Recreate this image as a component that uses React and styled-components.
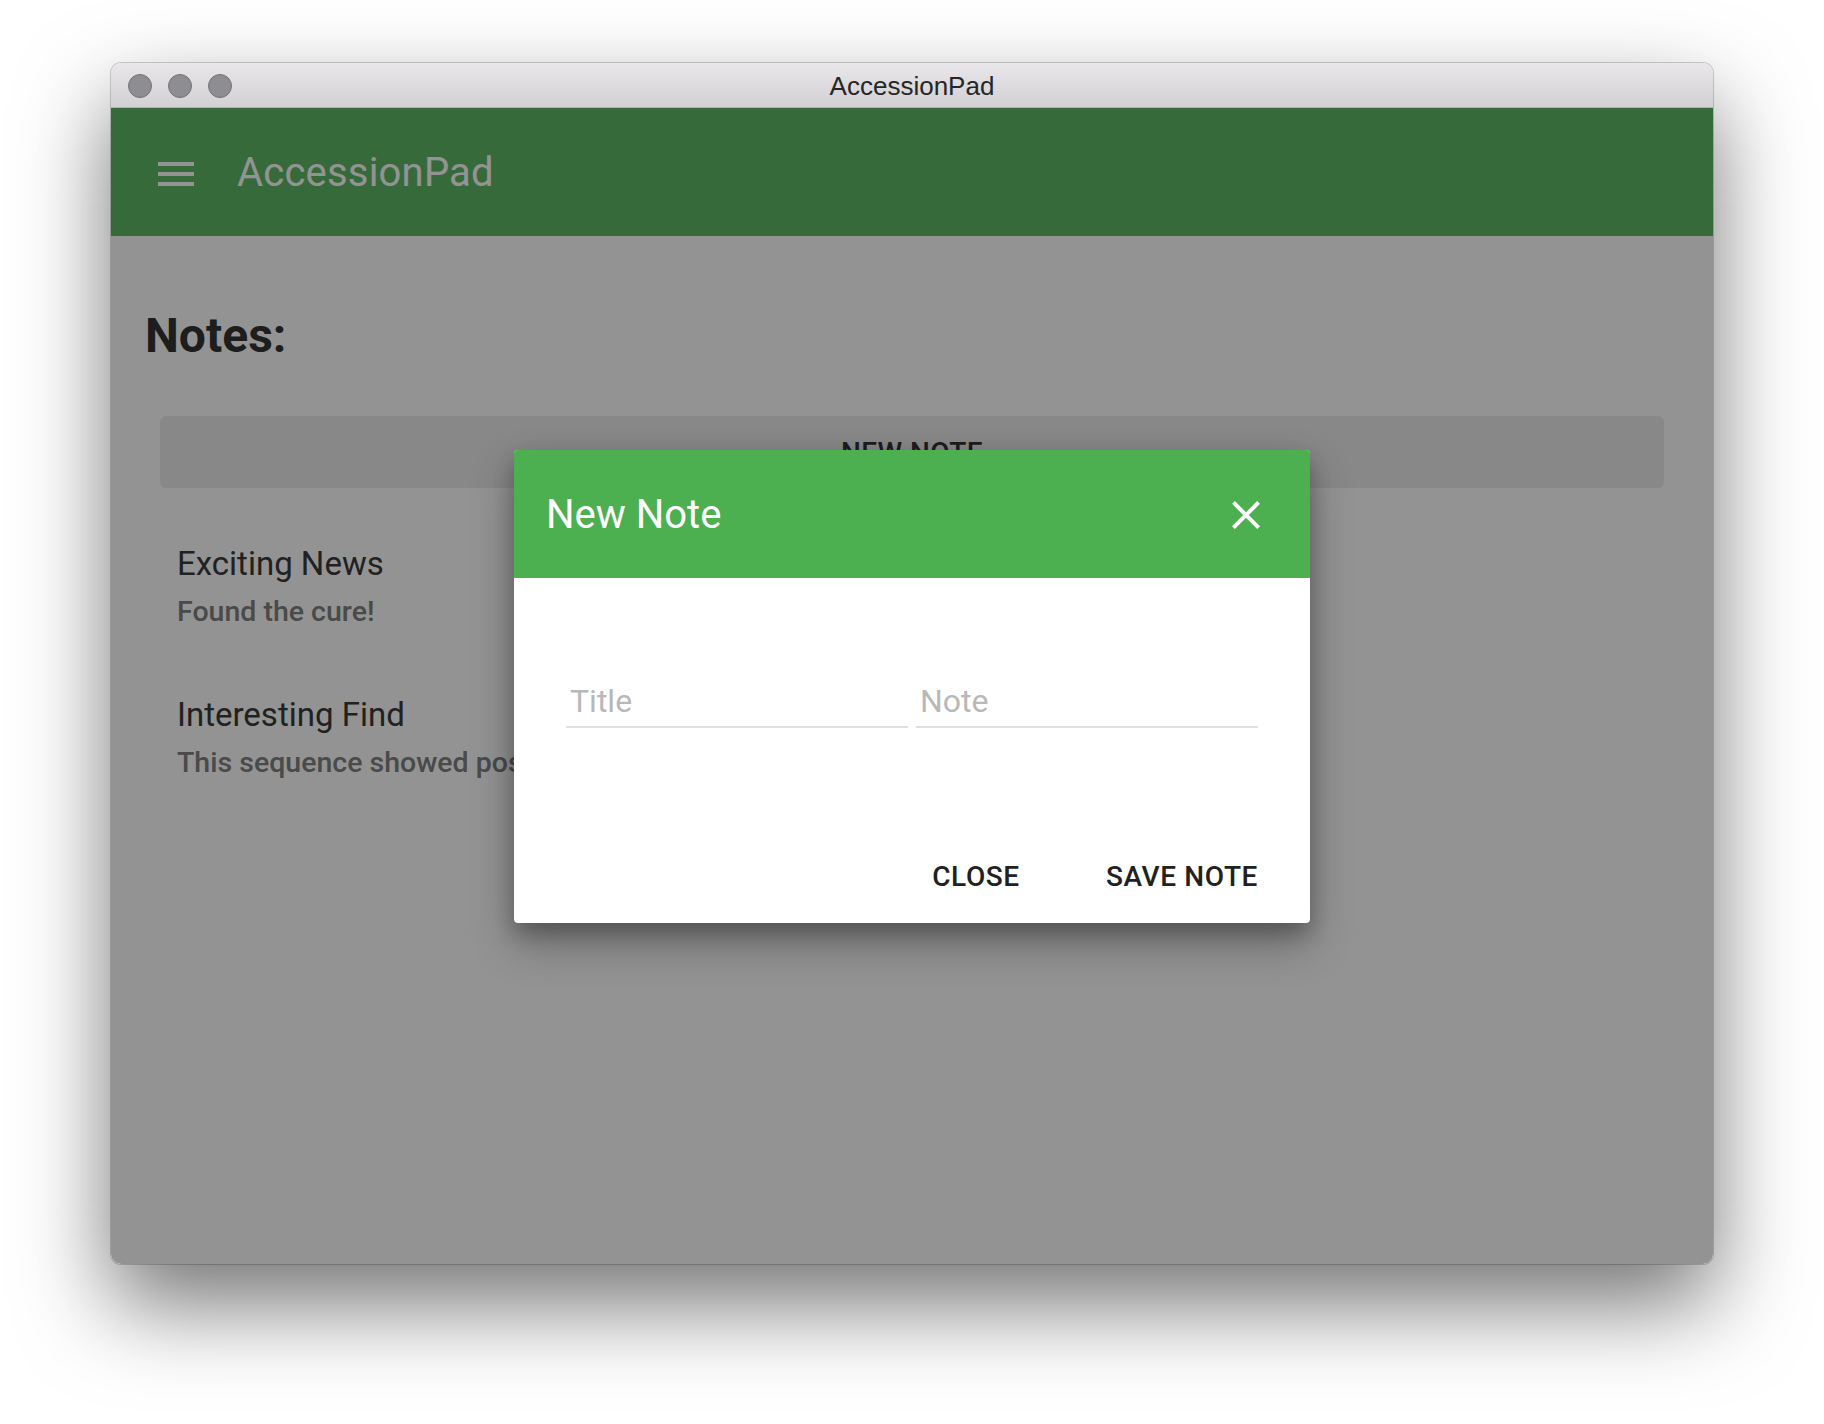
import React from 'react';
import styled, { createGlobalStyle } from 'styled-components';

const GlobalStyle = createGlobalStyle`
  html, body {
    margin: 0;
    padding: 0;
    background: #fff;
  }
  body {
    font-family: Roboto, "Noto Sans", sans-serif;
  }
  * {
    box-sizing: border-box;
  }
`;

const Desktop = styled.div`
  width: 1824px;
  height: 1424px;
  padding: 63px 111px 0;
  background: #fff;
`;

const Window = styled.div`
  height: 1201px;
  display: flex;
  flex-direction: column;
  border-radius: 10px;
  overflow: hidden;
  box-shadow: 0 0 0 1px rgba(0, 0, 0, 0.18), 0 40px 90px rgba(0, 0, 0, 0.55);
`;

const TitleBar = styled.div`
  flex: none;
  height: 45px;
  display: grid;
  grid-template-columns: 1fr auto 1fr;
  align-items: center;
  padding: 2px 17px 0;
  background: linear-gradient(#e9e7e9, #d2d0d2);
  border-bottom: 1px solid #b4b2b4;
`;

const Lights = styled.div`
  display: flex;
  gap: 16px;
`;

const Light = styled.span`
  width: 24px;
  height: 24px;
  border-radius: 50%;
  background: #8e8e92;
  border: 1px solid #737377;
`;

const WindowTitle = styled.div`
  margin-top: 1px;
  font-family: "Liberation Sans", Arial, sans-serif;
  font-size: 26px;
  color: #262626;
`;

const Content = styled.div`
  position: relative;
  flex: 1;
  display: flex;
  flex-direction: column;
  background: #fff;
`;

const AppBar = styled.header`
  flex: none;
  height: 128px;
  display: flex;
  align-items: center;
  padding-left: 41px;
  background: #5fb965;
`;

const MenuButton = styled.button`
  width: 48px;
  height: 48px;
  margin-top: 4px;
  padding: 0;
  border: none;
  background: transparent;
  display: flex;
  color: #fff;
`;

const AppTitle = styled.h1`
  margin: 2px 0 0 37px;
  font-size: 40px;
  font-weight: 400;
  line-height: 1;
  letter-spacing: 0.2px;
  color: #fff;
`;

const Main = styled.main`
  padding: 72px 49px 0 34px;
`;

const Heading = styled.h2`
  margin: 0;
  font-size: 48px;
  font-weight: 700;
  line-height: 56px;
  color: #333;
`;

const NewNoteBar = styled.button`
  display: block;
  width: calc(100% - 15px);
  height: 72px;
  margin: 52px 0 0 15px;
  border: none;
  border-radius: 6px;
  background: #ececec;
  font-family: Roboto, sans-serif;
  font-size: 28px;
  font-weight: 500;
  letter-spacing: 0.4px;
  color: #333;
  text-transform: uppercase;
`;

const NoteList = styled.ul`
  list-style: none;
  margin: 24px 0 0;
  padding: 0;
`;

const NoteItem = styled.li`
  padding: 32px 32px 33px;
`;

const NoteTitle = styled.div`
  font-size: 33px;
  line-height: 40px;
  color: #3a3a3a;
`;

const NoteText = styled.div`
  margin-top: 10px;
  font-size: 28.5px;
  line-height: 36px;
  font-weight: 500;
  color: #808080;
  white-space: nowrap;
`;

const Backdrop = styled.div`
  position: absolute;
  inset: 0;
  display: flex;
  justify-content: center;
  align-items: flex-start;
  padding-top: 342px;
  background: rgba(0, 0, 0, 0.424);
`;

const Dialog = styled.div`
  width: 796px;
  border-radius: 4px;
  overflow: hidden;
  background: #fff;
  box-shadow: 0 20px 44px rgba(0, 0, 0, 0.3), 0 10px 20px rgba(0, 0, 0, 0.22);
`;

const DialogHeader = styled.div`
  height: 128px;
  display: flex;
  align-items: center;
  justify-content: space-between;
  padding: 2px 40px 0 32px;
  background: #4caf50;
`;

const DialogTitle = styled.h3`
  margin: 0;
  font-size: 40px;
  font-weight: 400;
  line-height: 1;
  color: #fff;
`;

const IconButton = styled.button`
  width: 48px;
  height: 48px;
  padding: 0;
  border: none;
  background: transparent;
  display: flex;
  color: #fff;
  cursor: pointer;
`;

const DialogBody = styled.div`
  padding: 103px 52px 0;
`;

const Fields = styled.div`
  display: grid;
  grid-template-columns: 1fr 1fr;
  gap: 8px;
`;

const Field = styled.input`
  width: 100%;
  height: 47px;
  padding: 0 4px 5px;
  border: none;
  border-bottom: 2px solid #e0e0e0;
  outline: none;
  background: transparent;
  font-family: Roboto, sans-serif;
  font-size: 32px;
  color: #212121;

  &::placeholder {
    color: #b8b8b8;
  }
`;

const Actions = styled.div`
  display: flex;
  justify-content: flex-end;
  gap: 10px;
  padding: 112px 20px 11px 0;
`;

const TextButton = styled.button`
  height: 72px;
  min-width: 176px;
  padding: 0 32px;
  border: none;
  border-radius: 4px;
  background: transparent;
  font-family: Roboto, sans-serif;
  font-size: 28px;
  font-weight: 500;
  letter-spacing: 0.6px;
  color: #212121;
  text-transform: uppercase;
  cursor: pointer;
`;

const MenuIcon = () => (
  <svg width="48" height="48" viewBox="0 0 24 24" fill="currentColor">
    <path d="M3 18h18v-2H3v2zm0-5h18v-2H3v2zm0-7v2h18V6H3z" />
  </svg>
);

const CloseIcon = () => (
  <svg width="48" height="48" viewBox="0 0 24 24" fill="currentColor">
    <path d="M19 6.41L17.59 5 12 10.59 6.41 5 5 6.41 10.59 12 5 17.59 6.41 19 12 13.41 17.59 19 19 17.59 13.41 12z" />
  </svg>
);

const notes = [
  { title: 'Exciting News', text: 'Found the cure!' },
  { title: 'Interesting Find', text: 'This sequence showed positive results in every trial' },
];

export default function App() {
  return (
    <Desktop>
      <GlobalStyle />
      <Window>
        <TitleBar>
          <Lights>
            <Light />
            <Light />
            <Light />
          </Lights>
          <WindowTitle>AccessionPad</WindowTitle>
          <div />
        </TitleBar>
        <Content>
          <AppBar>
            <MenuButton aria-label="menu"><MenuIcon /></MenuButton>
            <AppTitle>AccessionPad</AppTitle>
          </AppBar>
          <Main>
            <Heading>Notes:</Heading>
            <NewNoteBar>New Note</NewNoteBar>
            <NoteList>
              {notes.map((n) => (
                <NoteItem key={n.title}>
                  <NoteTitle>{n.title}</NoteTitle>
                  <NoteText>{n.text}</NoteText>
                </NoteItem>
              ))}
            </NoteList>
          </Main>
          <Backdrop>
            <Dialog>
              <DialogHeader>
                <DialogTitle>New Note</DialogTitle>
                <IconButton aria-label="close"><CloseIcon /></IconButton>
              </DialogHeader>
              <DialogBody>
                <Fields>
                  <Field placeholder="Title" />
                  <Field placeholder="Note" />
                </Fields>
              </DialogBody>
              <Actions>
                <TextButton>Close</TextButton>
                <TextButton>Save Note</TextButton>
              </Actions>
            </Dialog>
          </Backdrop>
        </Content>
      </Window>
    </Desktop>
  );
}
